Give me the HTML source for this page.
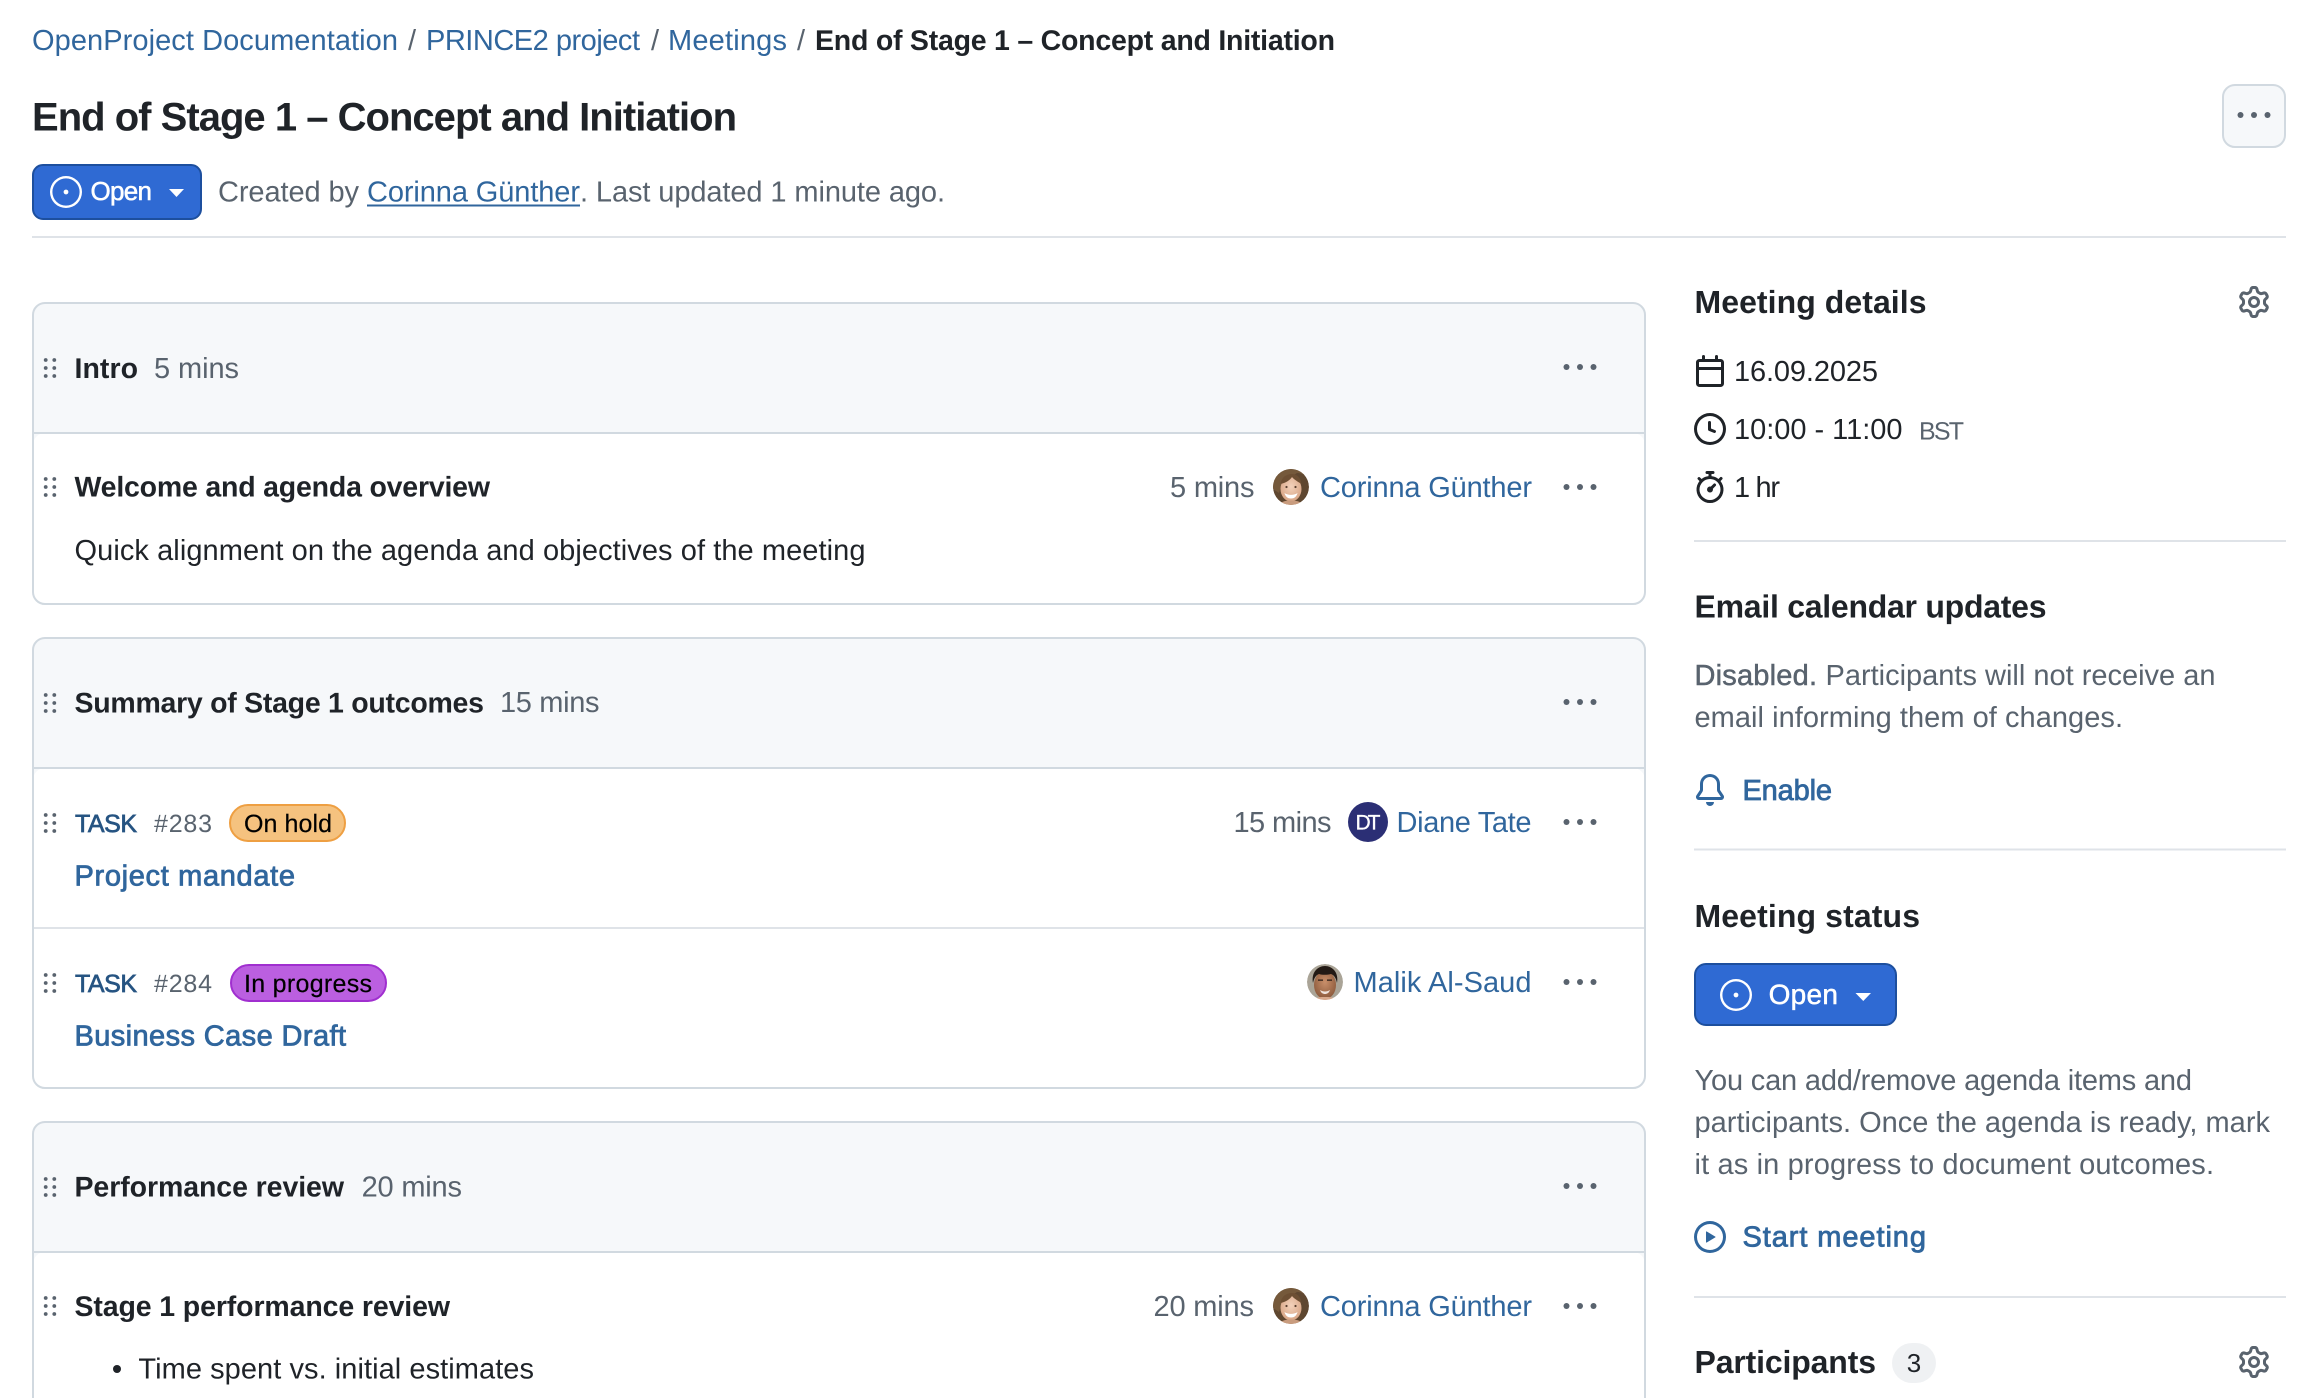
<!DOCTYPE html>
<html lang="en">
<head>
<meta charset="utf-8">
<title>End of Stage 1 – Concept and Initiation</title>
<style>
html,body{margin:0;padding:0;background:#fff;width:2320px;height:1398px;overflow:hidden}
svg{display:block}
text{font-family:"Liberation Sans",Arial,sans-serif;font-size:29px;fill:#1f2328;text-rendering:geometricPrecision;white-space:pre}
.b{font-weight:700;font-size:28.500px}
.l{fill:#30669d}
.m{fill:#59636e}
.s{font-size:25px}
.h{font-size:32px;font-weight:700}
.wl{fill:#30669d;stroke:#30669d;stroke-width:.8px}
.wm{fill:#59636e;stroke:#59636e;stroke-width:.5px}
.wt{fill:#265482;stroke:#265482;stroke-width:.7px;font-size:25px}
.wk{fill:#000;stroke:#000;stroke-width:.2px;font-size:25px}
.ww{fill:#fff;stroke:#fff;stroke-width:.5px}
.card{fill:none;stroke:#d1d9e0;stroke-width:2}
</style>
</head>
<body>
<svg xmlns="http://www.w3.org/2000/svg" width="2320" height="1398" viewBox="0 0 2320 1398">
<defs>
<path id="open" d="M8 9.200a1.200 1.200 0 1 0 0-2.400 1.200 1.200 0 0 0 0 2.400ZM8 0a8 8 0 1 1 0 16A8 8 0 0 1 8 0ZM1.200 8a6.800 6.800 0 1 0 13.600 0 6.800 6.800 0 0 0-13.600 0Z" fill-rule="evenodd"/>
<path id="gear" fill="#59636e" d="M8 0a8.2 8.2 0 0 1 .701.031C9.444.095 9.99.645 10.16 1.29l.288 1.107c.018.066.079.158.212.224.231.114.454.243.668.386.123.082.233.09.299.071l1.103-.303c.644-.176 1.392.021 1.82.63.27.385.506.792.704 1.218.315.675.111 1.422-.364 1.891l-.814.806c-.049.048-.098.147-.088.294.016.257.016.515 0 .772-.01.147.038.246.088.294l.814.806c.475.469.679 1.216.364 1.891a7.977 7.977 0 0 1-.704 1.217c-.428.61-1.176.807-1.82.63l-1.102-.302c-.067-.019-.177-.011-.3.071a5.909 5.909 0 0 1-.668.386c-.133.066-.194.158-.211.224l-.29 1.106c-.168.646-.715 1.196-1.458 1.26a8.006 8.006 0 0 1-1.402 0c-.743-.064-1.289-.614-1.458-1.26l-.289-1.106c-.018-.066-.079-.158-.212-.224a5.738 5.738 0 0 1-.668-.386c-.123-.082-.233-.09-.299-.071l-1.103.303c-.644.176-1.392-.021-1.82-.63a8.12 8.12 0 0 1-.704-1.218c-.315-.675-.111-1.422.363-1.891l.815-.806c.05-.048.098-.147.088-.294a6.214 6.214 0 0 1 0-.772c.01-.147-.038-.246-.088-.294l-.815-.806C.635 6.045.431 5.298.746 4.623a7.92 7.92 0 0 1 .704-1.217c.428-.61 1.176-.807 1.82-.63l1.102.302c.067.019.177.011.3-.071.214-.143.437-.272.668-.386.133-.066.194-.158.211-.224l.29-1.106C6.009.645 6.556.095 7.299.03 7.53.01 7.764 0 8 0Zm-.571 1.525c-.036.003-.108.036-.137.146l-.289 1.105c-.147.561-.549.967-.998 1.189-.173.086-.34.183-.5.29-.417.278-.97.423-1.529.27l-1.103-.303c-.109-.03-.175.016-.195.045-.22.312-.412.644-.573.99-.014.031-.021.11.059.19l.815.806c.411.406.562.957.53 1.456a4.709 4.709 0 0 0 0 .582c.032.499-.119 1.05-.53 1.456l-.815.806c-.081.08-.073.159-.059.19.162.346.353.677.573.989.02.03.085.076.195.046l1.102-.303c.56-.153 1.113-.008 1.53.27.161.107.328.204.501.29.447.222.85.629.997 1.189l.289 1.105c.029.109.101.143.137.146a6.6 6.6 0 0 0 1.142 0c.036-.003.108-.036.137-.146l.289-1.105c.147-.561.549-.967.998-1.189.173-.086.34-.183.5-.29.417-.278.97-.423 1.529-.27l1.103.303c.109.029.175-.016.195-.045.22-.313.411-.644.573-.99.014-.031.021-.11-.059-.19l-.815-.806c-.411-.406-.562-.957-.53-1.456a4.709 4.709 0 0 0 0-.582c-.032-.499.119-1.05.53-1.456l.815-.806c.081-.08.073-.159.059-.19a6.464 6.464 0 0 0-.573-.989c-.02-.03-.085-.076-.195-.046l-1.102.303c-.56.153-1.113.008-1.53-.27a4.44 4.44 0 0 0-.501-.29c-.447-.222-.85-.629-.997-1.189l-.289-1.105c-.029-.11-.101-.143-.137-.146a6.6 6.6 0 0 0-1.142 0ZM11 8a3 3 0 1 1-6 0 3 3 0 0 1 6 0ZM9.5 8a1.5 1.5 0 1 0-3.001.001A1.5 1.5 0 0 0 9.5 8Z"/>
<g id="drag" fill="#59636e"><circle cx="1.700" cy="2" r="1.900"/><circle cx="10.300" cy="2" r="1.900"/><circle cx="1.700" cy="10" r="1.900"/><circle cx="10.300" cy="10" r="1.900"/><circle cx="1.700" cy="18" r="1.900"/><circle cx="10.300" cy="18" r="1.900"/></g>
<g id="dots" fill="#59636e"><circle cx="0" cy="0" r="3"/><circle cx="13.500" cy="0" r="3"/><circle cx="27" cy="0" r="3"/></g>
<clipPath id="avc"><circle cx="18" cy="18" r="18"/></clipPath>
<radialGradient id="skin" cx="50%" cy="40%" r="60%"><stop offset="0" stop-color="#f3d2bb"/><stop offset="1" stop-color="#d8a585"/></radialGradient>
<radialGradient id="skin2" cx="50%" cy="40%" r="60%"><stop offset="0" stop-color="#c98f6a"/><stop offset="1" stop-color="#8c5a3c"/></radialGradient>
<g id="cor" clip-path="url(#avc)">
<circle cx="18" cy="18" r="18" fill="#5f4730"/>
<path d="M0 0h36v12c-2-5-6-8-12-8-4 3-10 4-14 8L6 24 0 20Z" fill="#75593b"/>
<ellipse cx="18" cy="20" rx="10.500" ry="12.500" fill="url(#skin)"/>
<path d="M7.500 15c1-7 6-10 11.500-10 5 0 9 4 9.500 10-3-2-7-4-9.500-7-2 3-6 6-11.500 7Z" fill="#6d4f33"/>
<path d="M11.500 24c3.500 2.500 9.500 2.500 13 0-1 4-3.500 5.500-6.500 5.500s-5.500-1.500-6.500-5.500Z" fill="#fff"/>
<circle cx="13.500" cy="18" r="1.100" fill="#5a4030"/><circle cx="22.500" cy="18" r="1.100" fill="#5a4030"/>
<path d="M6 36c2-4 8-4.500 12-4.500s10 .5 12 4.500Z" fill="#c99c7e"/>
</g>
<g id="mal" clip-path="url(#avc)">
<circle cx="18" cy="18" r="18" fill="#aaa497"/>
<ellipse cx="18" cy="21" rx="11" ry="14" fill="url(#skin2)"/>
<path d="M6 19C4 8 11 2 18 2s14 6 12 17c-1-5-3-8-6-9-4 1-9 1-12 0-3 1-5 4-6 9Z" fill="#231a15"/>
<path d="M11 15.500h5v1.200h-5ZM20 15.500h5v1.200h-5Z" fill="#2a1d16"/>
<path d="M13 26c3 2 7 2 10 0-1 3-3 4-5 4s-4-1-5-4Z" fill="#efe4dc"/>
<path d="M6 36c3-3 8-3 12-3s9 0 12 3Z" fill="#d8a98c"/>
</g>
</defs>

<!-- Breadcrumb -->
<text class="l" x="32" y="50" textLength="366">OpenProject Documentation</text>
<text class="m" x="408" y="50">/</text>
<text class="l" x="426" y="50" textLength="214">PRINCE2 project</text>
<text class="m" x="651" y="50">/</text>
<text class="l" x="668" y="50" textLength="119">Meetings</text>
<text class="m" x="797" y="50">/</text>
<text class="b" x="815" y="50" textLength="520">End of Stage 1 – Concept and Initiation</text>

<!-- Title -->
<text class="b" style="font-size:40px" x="32" y="130.500" textLength="705">End of Stage 1 – Concept and Initiation</text>

<!-- Kebab -->
<rect x="2223" y="85" width="62" height="62" rx="12" fill="#f6f8fa" stroke="#d1d9e0" stroke-width="2"/>
<use href="#dots" x="2240.500" y="115"/>

<!-- Status button -->
<rect x="33" y="165" width="168" height="54" rx="10" fill="#2f6ad3" stroke="#1d4f9e" stroke-width="2"/>
<use href="#open" fill="#fff" transform="translate(50 176) scale(2)"/>
<text class="ww" style="font-size:26px" x="90.500" y="200" textLength="61.500">Open</text>
<path d="M169 189h15l-7.500 8Z" fill="#fff"/>

<text class="m" x="218" y="201.500" textLength="141">Created by</text>
<text class="l" x="367" y="201.500" textLength="213">Corinna Günther</text>
<rect x="367" y="204.500" width="213" height="2" fill="#30669d"/>
<text class="m" x="580" y="201.500" textLength="365">. Last updated 1 minute ago.</text>

<rect x="32" y="236" width="2254" height="2" fill="#dfe3e8"/>

<!-- Card 1 -->
<rect x="33" y="303" width="1612" height="301" rx="12" fill="#f6f8fa"/>
<rect x="33" y="433" width="1612" height="171" rx="12" fill="#fff"/>
<rect x="33" y="432" width="1612" height="2" fill="#d1d9e0"/>
<rect class="card" x="33" y="303" width="1612" height="301" rx="12"/>
<use href="#drag" x="44" y="358"/>
<text class="b" x="74.500" y="378" textLength="63.500">Intro</text>
<text class="m" x="154" y="378" textLength="85">5 mins</text>
<use href="#dots" x="1566.500" y="367"/>
<use href="#drag" x="44" y="477"/>
<text class="b" x="74.500" y="496.500" textLength="415.500">Welcome and agenda overview</text>
<text class="m" x="1170" y="497" textLength="84.500">5 mins</text>
<use href="#cor" x="1273" y="469"/>
<text class="l" x="1320" y="497" textLength="212">Corinna Günther</text>
<use href="#dots" x="1566.500" y="487"/>
<text x="74.500" y="560" textLength="791">Quick alignment on the agenda and objectives of the meeting</text>

<!-- Card 2 -->
<rect x="33" y="638" width="1612" height="450" rx="12" fill="#f6f8fa"/>
<rect x="33" y="768" width="1612" height="320" rx="12" fill="#fff"/>
<rect x="33" y="767" width="1612" height="2" fill="#d1d9e0"/>
<rect x="33" y="927" width="1612" height="2" fill="#dfe3e8"/>
<rect class="card" x="33" y="638" width="1612" height="450" rx="12"/>
<use href="#drag" x="44" y="693"/>
<text class="b" x="74.500" y="712.500" textLength="409.500">Summary of Stage 1 outcomes</text>
<text class="m" x="500" y="712" textLength="99.500">15 mins</text>
<use href="#dots" x="1566.500" y="702"/>

<use href="#drag" x="44" y="813"/>
<text class="wt" x="75" y="832" textLength="62">TASK</text>
<text class="m s" x="154" y="832" textLength="58">#283</text>
<rect x="230" y="805" width="115" height="36" rx="18" fill="#f5c27f" stroke="#ee9f42" stroke-width="2"/>
<text class="wk" x="244" y="832" textLength="88">On hold</text>
<text class="m" x="1233.500" y="832" textLength="98">15 mins</text>
<circle cx="1368" cy="822" r="20" fill="#2b2f75"/>
<text class="ww" style="font-size:21px;stroke-width:.3px" x="1355.500" y="829.500" textLength="25">DT</text>
<text class="l" x="1396.500" y="832" textLength="135">Diane Tate</text>
<use href="#dots" x="1566.500" y="822"/>
<text class="wl" x="74.500" y="885.500" textLength="220.500">Project mandate</text>

<use href="#drag" x="44" y="973"/>
<text class="wt" x="75" y="992" textLength="62">TASK</text>
<text class="m s" x="154" y="992" textLength="58">#284</text>
<rect x="231" y="965" width="155" height="36" rx="18" fill="#bb5fe0" stroke="#a02fcf" stroke-width="2"/>
<text class="wk" x="244" y="992" textLength="128">In progress</text>
<use href="#mal" x="1307" y="964"/>
<text class="l" x="1353.500" y="992" textLength="178">Malik Al-Saud</text>
<use href="#dots" x="1566.500" y="982"/>
<text class="wl" x="74.500" y="1045.500" textLength="271.500">Business Case Draft</text>

<!-- Card 3 -->
<path d="M33 1398V1134a12 12 0 0 1 12-12H1633a12 12 0 0 1 12 12V1398Z" fill="#f6f8fa"/>
<path d="M33 1398V1264a12 12 0 0 1 12-12H1633a12 12 0 0 1 12 12V1398Z" fill="#fff"/>
<rect x="33" y="1251" width="1612" height="2" fill="#d1d9e0"/>
<path class="card" d="M33 1398V1134a12 12 0 0 1 12-12H1633a12 12 0 0 1 12 12V1398"/>
<use href="#drag" x="44" y="1177"/>
<text class="b" x="74.500" y="1196.500" textLength="269.500">Performance review</text>
<text class="m" x="361.600" y="1196.500" textLength="100.400">20 mins</text>
<use href="#dots" x="1566.500" y="1186"/>
<use href="#drag" x="44" y="1296"/>
<text class="b" x="74.500" y="1316" textLength="375.500">Stage 1 performance review</text>
<text class="m" x="1153.500" y="1316" textLength="100.500">20 mins</text>
<use href="#cor" x="1273" y="1288"/>
<text class="l" x="1320" y="1316" textLength="212">Corinna Günther</text>
<use href="#dots" x="1566.500" y="1306"/>
<circle cx="117" cy="1369" r="4" fill="#1f2328"/>
<text x="138.400" y="1378.500" textLength="395.600">Time spent vs. initial estimates</text>

<!-- Sidebar: details -->
<text class="h" x="1694.500" y="313" textLength="232">Meeting details</text>
<use href="#gear" transform="translate(2238 286) scale(2)"/>
<path fill="#1f2328" transform="translate(1694 355) scale(2)" d="M4.750 0a.75.75 0 0 1 .75.75V2h5V.75a.75.75 0 0 1 1.500 0V2h1.250c.966 0 1.750.784 1.750 1.750v10.500A1.750 1.750 0 0 1 13.250 16H2.750A1.750 1.750 0 0 1 1 14.250V3.750C1 2.784 1.784 2 2.750 2H4V.75A.75.75 0 0 1 4.750 0ZM2.500 7.500v6.750c0 .138.112.25.25.25h10.500a.25.25 0 0 0 .25-.25V7.500Zm10.750-4H2.750a.25.25 0 0 0-.25.25V6h11V3.750a.25.25 0 0 0-.25-.25Z"/>
<text x="1734" y="381" textLength="144">16.09.2025</text>
<path fill="#1f2328" transform="translate(1694 413) scale(2)" d="M8 0a8 8 0 1 1 0 16A8 8 0 0 1 8 0ZM1.500 8a6.500 6.500 0 1 0 13 0 6.500 6.500 0 0 0-13 0Zm7-3.250v2.992l2.028.812a.75.75 0 0 1-.557 1.392l-2.500-1A.751.751 0 0 1 7 8.250v-3.500a.75.75 0 0 1 1.500 0Z"/>
<text x="1734" y="439" textLength="168.500">10:00 - 11:00</text>
<text class="m s" x="1919" y="439.500" textLength="45">BST</text>
<path fill="#1f2328" transform="translate(1694 471) scale(2)" d="M5.750.75A.75.75 0 0 1 6.500 0h3a.75.75 0 0 1 0 1.500h-.75v1l-.001.041a6.724 6.724 0 0 1 3.464 1.435l.007-.006.75-.75a.75.75 0 1 1 1.060 1.060l-.75.75-.006.007a6.750 6.750 0 1 1-10.548 0L2.720 5.030l-.75-.75a.75.75 0 0 1 1.060-1.060l.75.75.007.006A6.720 6.720 0 0 1 7.250 2.541V1.500H6.500a.75.75 0 0 1-.75-.75ZM8 14.500A5.250 5.250 0 1 0 8 4a5.250 5.250 0 0 0 0 10.500Zm.389-6.700 1.330-1.330a.75.75 0 1 1 1.061 1.060L9.450 8.861A1.503 1.503 0 0 1 8 10.750a1.499 1.499 0 1 1 .389-2.950Z"/>
<text x="1734" y="497" textLength="46">1 hr</text>
<rect x="1694" y="540" width="592" height="2" fill="#dfe3e8"/>

<!-- Email -->
<text class="h" x="1694.500" y="617.500" textLength="352">Email calendar updates</text>
<text class="wm" x="1694.500" y="685" textLength="122.500">Disabled.</text>
<text class="m" x="1825.500" y="685" textLength="390">Participants will not receive an</text>
<text class="m" x="1694.500" y="727" textLength="428.500">email informing them of changes.</text>
<path fill="#30669d" transform="translate(1694 774) scale(2)" d="M8 16a2 2 0 0 0 1.985-1.750c.017-.137-.097-.25-.235-.25h-3.500c-.138 0-.252.113-.235.25A2 2 0 0 0 8 16ZM3 5a5 5 0 0 1 10 0v2.947c0 .05.015.098.042.139l1.703 2.555A1.519 1.519 0 0 1 13.482 13H2.518a1.516 1.516 0 0 1-1.263-2.360l1.703-2.554A.255.255 0 0 0 3 7.947Zm5-3.500A3.500 3.500 0 0 0 4.500 5v2.947c0 .346-.102.683-.294.97l-1.703 2.556a.017.017 0 0 0-.003.01l.001.006c0 .002.002.004.004.006l.006.004.007.001h10.964l.007-.001.006-.004.004-.006.001-.007a.017.017 0 0 0-.003-.01l-1.703-2.554a1.745 1.745 0 0 1-.294-.97V5A3.500 3.500 0 0 0 8 1.500Z"/>
<text class="wl" x="1742.500" y="800" textLength="89.500">Enable</text>
<rect x="1694" y="848.500" width="592" height="2" fill="#dfe3e8"/>

<!-- Status -->
<text class="h" x="1694.500" y="927" textLength="225.500">Meeting status</text>
<rect x="1695" y="964" width="201" height="61" rx="11" fill="#2f6ad3" stroke="#1d4f9e" stroke-width="2"/>
<use href="#open" fill="#fff" transform="translate(1720 979) scale(2)"/>
<text class="ww" style="font-size:28px" x="1768.600" y="1004" textLength="69.400">Open</text>
<path d="M1855.500 993h15.500l-7.750 8Z" fill="#fff"/>
<text class="m" x="1694.500" y="1090" textLength="497.500">You can add/remove agenda items and</text>
<text class="m" x="1694.500" y="1132" textLength="575.500">participants. Once the agenda is ready, mark</text>
<text class="m" x="1694.500" y="1174" textLength="519.500">it as in progress to document outcomes.</text>
<path fill="#30669d" transform="translate(1694 1221) scale(2)" d="M8 0a8 8 0 1 1 0 16A8 8 0 0 1 8 0ZM1.500 8a6.500 6.500 0 1 0 13 0 6.500 6.500 0 0 0-13 0Zm4.879-2.773 4.264 2.559a.25.25 0 0 1 0 .428l-4.264 2.559A.25.25 0 0 1 6 10.559V5.442a.25.25 0 0 1 .379-.215Z"/>
<text class="wl" x="1742.500" y="1246.500" textLength="183.500">Start meeting</text>
<rect x="1694" y="1296" width="592" height="2" fill="#dfe3e8"/>

<!-- Participants -->
<text class="h" x="1694.500" y="1373" textLength="181.500">Participants</text>
<rect x="1892" y="1343" width="44" height="40" rx="20" fill="#eff1f3"/>
<text style="font-size:26px" x="1914" y="1372" text-anchor="middle">3</text>
<use href="#gear" transform="translate(2238 1346) scale(2)"/>
</svg>
</body>
</html>
